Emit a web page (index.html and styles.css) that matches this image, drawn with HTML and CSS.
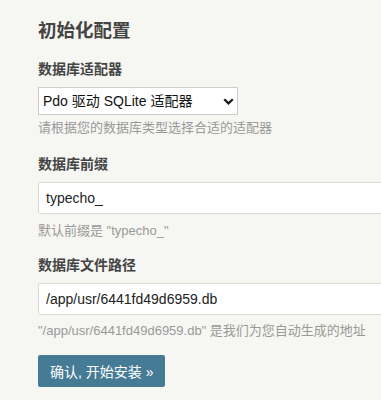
FILE: index.html
```html
<!DOCTYPE html>
<html lang="zh-CN">
<head>
<meta charset="utf-8">
<title>初始化配置</title>
<link rel="stylesheet" href="styles.css">
</head>
<body>
<div class="page">
  <h2 class="title">初始化配置</h2>
  <div class="option">
    <label class="label">数据库适配器</label>
    <div class="select-wrap">
      <select class="select">
        <option>Pdo 驱动 SQLite 适配器</option>
      </select>
      <svg class="chevron" width="11" height="7" viewBox="0 0 11 7"><path d="M1.2 1.2 L5.5 5.4 L9.8 1.2" fill="none" stroke="#1a1a1a" stroke-width="2.2"/></svg>
    </div>
    <p class="desc">请根据您的数据库类型选择合适的适配器</p>
  </div>
  <div class="option">
    <label class="label">数据库前缀</label>
    <input class="input" type="text" value="typecho_">
    <p class="desc">默认前缀是 "typecho_"</p>
  </div>
  <div class="option">
    <label class="label">数据库文件路径</label>
    <input class="input" type="text" value="/app/usr/6441fd49d6959.db">
    <p class="desc">"/app/usr/6441fd49d6959.db" 是我们为您自动生成的地址</p>
  </div>
  <button class="btn primary" type="button">确认, 开始安装 »</button>
</div>
</body>
</html>
```
FILE: styles.css
```css
html, body {
  margin: 0;
  padding: 0;
  overflow: hidden;
}
body {
  background: #f6f6f3;
  color: #444;
  font-family: "Liberation Sans", "Noto Sans CJK SC", sans-serif;
  font-size: 14px;
}
.page {
  padding-left: 38px;
  display: flex;
  flex-direction: column;
  align-items: flex-start;
}
.title {
  margin: 17px 0 0;
  font-size: 18.5px;
  line-height: 27px;
  font-weight: bold;
  color: #444;
}
.option {
  display: flex;
  flex-direction: column;
  align-items: flex-start;
  margin-top: 15px;
}
.label {
  display: block;
  font-weight: bold;
  line-height: 20px;
  margin-bottom: 8px;
}
.select-wrap {
  position: relative;
  width: 200px;
  height: 28px;
}
.select {
  appearance: none;
  -webkit-appearance: none;
  box-sizing: border-box;
  width: 200px;
  height: 28px;
  margin: 0;
  padding: 0 0 0 4px;
  border: 1px solid #ccc;
  border-radius: 0;
  background: #fff;
  color: #111;
  font-family: inherit;
  font-size: 14px;
}
.chevron {
  position: absolute;
  right: 4px;
  top: 11px;
}
.input {
  box-sizing: border-box;
  width: 420px;
  height: 32px;
  margin: 0;
  padding: 0 7px;
  border: 1px solid #d9d9d6;
  border-radius: 2px;
  background: #fff;
  color: #222;
  font-family: inherit;
  font-size: 14px;
}
.desc {
  margin: 7px 0 0;
  line-height: 20px;
  font-size: 13px;
  color: #999;
}
.select-wrap + .desc {
  margin-top: 3px;
}
.option:first-of-type + .option {
  margin-top: 16px;
}
.option:last-of-type {
  margin-top: 14px;
}
.option:last-of-type .desc {
  margin-top: 6px;
}
.btn {
  margin-top: 14px;
  height: 32px;
  padding: 0 12px;
  border: none;
  border-radius: 2px;
  font-family: inherit;
  font-size: 14px;
  cursor: pointer;
}
.primary {
  background: #467b96;
  color: #fff;
}
```
